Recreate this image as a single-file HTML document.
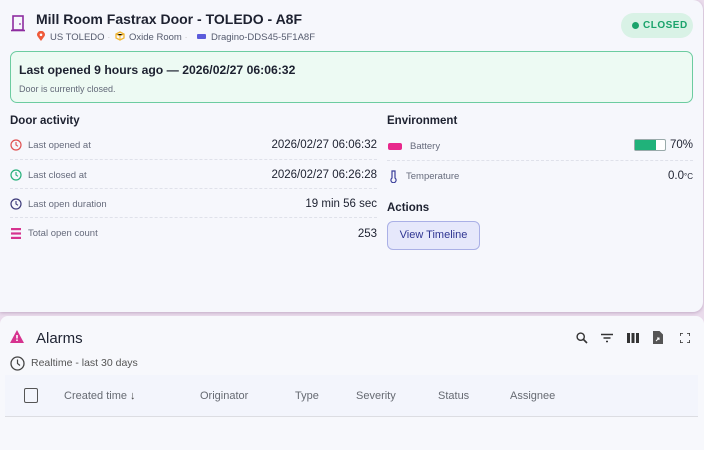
<!DOCTYPE html>
<html><head><meta charset="utf-8"><style>
*{box-sizing:border-box;margin:0;padding:0}
body{width:704px;height:450px;background:#eadcec;font-family:"Liberation Sans",sans-serif;position:relative;overflow:hidden;color:#1f2433}
.card1{position:absolute;left:0;top:0;width:703px;height:312px;background:#f6f7fc;border-radius:0 10px 10px 0;box-shadow:0 1px 3px rgba(120,80,130,.35)}
.card2{position:absolute;left:0;top:316px;width:704px;height:134px;background:#f7f8fc;border-radius:8px 8px 0 0}
.abs{position:absolute;white-space:nowrap}
.t{font-size:14px;font-weight:bold;color:#1d2130}
.sub{font-size:9.5px;color:#555b6e}
.h{font-size:11.5px;font-weight:bold;color:#1d2130}
.lbl{font-size:9.5px;color:#666b7c}
.val{font-size:11.5px;color:#1d2130;text-align:right}
.dash{position:absolute;height:0;border-top:1px dashed #dfe1ea}
.th{font-family:"Liberation Sans Narrow","Liberation Sans",sans-serif;font-size:11px;color:#666a72;position:absolute;top:389px}
</style></head><body>
<div class="card1"></div>
<svg class="abs" style="left:11px;top:15px" width="14" height="17" viewBox="0 0 14 17"><rect x="2" y="1" width="10" height="14" fill="none" stroke="#8e2ca0" stroke-width="1.6"/><line x1="0" y1="15.5" x2="14" y2="15.5" stroke="#8e2ca0" stroke-width="1.6"/><circle cx="9" cy="9" r="0.9" fill="#8e2ca0"/></svg>
<div class="abs t" style="left:36px;top:11px">Mill Room Fastrax Door - TOLEDO - A8F</div>
<svg class="abs" style="left:37px;top:31px" width="8" height="10" viewBox="0 0 8 10"><path d="M4 10C1 6 0 5 0 3.8A4 4 0 0 1 8 3.8C8 5 7 6 4 10Z" fill="#ef5a3a"/><circle cx="4" cy="3.8" r="1.3" fill="#fff"/></svg>
<div class="abs sub" style="left:50px;top:32px">US TOLEDO <span style="color:#ccc">·</span></div>
<svg class="abs" style="left:115px;top:31px" width="10" height="10" viewBox="0 0 10 10"><path d="M5 1 9 3v4L5 9 1 7V3Z" fill="none" stroke="#f2b630" stroke-width="1.3"/><path d="M1 3l4 2 4-2M5 5v4" stroke="#f2b630" stroke-width="1"/></svg>
<div class="abs sub" style="left:129px;top:32px">Oxide Room <span style="color:#ccc">·</span></div>
<div class="abs" style="left:197px;top:34px;width:9px;height:5px;background:#5b5bdb;border-radius:1px"></div>
<div class="abs sub" style="left:211px;top:32px">Dragino-DDS45-5F1A8F</div>
<div class="abs" style="left:621px;top:13px;width:72px;height:25px;background:#d9f2e6;border-radius:13px"></div>
<div class="abs" style="left:632px;top:22px;width:7px;height:7px;background:#1aa36b;border-radius:50%"></div>
<div class="abs" style="left:643px;top:20px;font-size:10px;font-weight:bold;color:#1aa36b;letter-spacing:.5px">CLOSED</div>
<div class="abs" style="left:10px;top:51px;width:683px;height:52px;background:#edfaf3;border:1.5px solid #6ccca0;border-radius:7px"></div>
<div class="abs" style="left:19px;top:63px;font-size:12.2px;font-weight:bold;color:#1d2130">Last opened 9 hours ago — 2026/02/27 06:06:32</div>
<div class="abs" style="left:19px;top:84px;font-size:9px;color:#626878">Door is currently closed.</div>
<div class="abs h" style="left:10px;top:115px">Door activity</div>
<div class="abs h" style="left:387px;top:115px">Environment</div>

<svg class="abs" style="left:10px;top:139px" width="12" height="12" viewBox="0 0 12 12"><circle cx="6" cy="6" r="5" fill="none" stroke="#e05050" stroke-width="1.2"/><path d="M6 3v3l2 1.3" fill="none" stroke="#e05050" stroke-width="1.1"/></svg>
<div class="abs lbl" style="left:28px;top:140px">Last opened at</div>
<div class="abs val" style="right:327px;top:139px">2026/02/27 06:06:32</div>
<div class="dash" style="left:10px;width:367px;top:159px"></div>
<svg class="abs" style="left:10px;top:169px" width="12" height="12" viewBox="0 0 12 12"><circle cx="6" cy="6" r="5" fill="none" stroke="#25b07a" stroke-width="1.2"/><path d="M6 3v3l2 1.3" fill="none" stroke="#25b07a" stroke-width="1.1"/></svg>
<div class="abs lbl" style="left:28px;top:170px">Last closed at</div>
<div class="abs val" style="right:327px;top:169px">2026/02/27 06:26:28</div>
<div class="dash" style="left:10px;width:367px;top:188px"></div>
<svg class="abs" style="left:10px;top:198px" width="12" height="12" viewBox="0 0 12 12"><circle cx="6" cy="6" r="5" fill="none" stroke="#3d3a7a" stroke-width="1.2"/><path d="M6 3v3l2 1.3" fill="none" stroke="#3d3a7a" stroke-width="1.1"/></svg>
<div class="abs lbl" style="left:28px;top:199px">Last open duration</div>
<div class="abs val" style="right:327px;top:198px">19 min 56 sec</div>
<div class="dash" style="left:10px;width:367px;top:217px"></div>
<svg class="abs" style="left:11px;top:228px" width="10" height="11" viewBox="0 0 10 11"><rect y="0" width="10" height="2.2" fill="#d6338f"/><rect y="4.4" width="10" height="2.2" fill="#d6338f"/><rect y="8.8" width="10" height="2.2" fill="#d6338f"/></svg>
<div class="abs lbl" style="left:28px;top:228px">Total open count</div>
<div class="abs val" style="right:327px;top:228px">253</div>

<div class="abs" style="left:388px;top:143px;width:14px;height:7px;background:#e8288c;border-radius:2px"></div>
<div class="abs lbl" style="left:410px;top:141px">Battery</div>
<div class="abs" style="left:634px;top:139px;width:32px;height:12px;border:1px solid #9aa;border-radius:2px;background:#fff"><div style="width:21px;height:10px;background:#20b27a"></div></div>
<div class="abs val" style="right:11px;top:139px">70%</div>
<div class="dash" style="left:387px;width:306px;top:160px"></div>
<svg class="abs" style="left:390px;top:170px" width="7" height="13" viewBox="0 0 7 13"><path d="M2 1h3v7a2.6 2.6 0 1 1-3 0Z" fill="none" stroke="#3b3f9a" stroke-width="1.2"/></svg>
<div class="abs lbl" style="left:406px;top:171px">Temperature</div>
<div class="abs val" style="right:11px;top:170px">0.0<span style="font-size:8px">°C</span></div>
<div class="abs h" style="left:387px;top:202px">Actions</div>
<div class="abs" style="left:387px;top:221px;width:93px;height:29px;background:#e6e8fb;border:1px solid #aab0e6;border-radius:6px;font-size:11px;color:#2f3592;text-align:center;line-height:27px">View Timeline</div>

<div class="card2"></div>
<svg class="abs" style="left:10px;top:330px" width="14" height="13" viewBox="0 0 14 13"><path d="M7 0 14 13H0Z" fill="#d6338f"/><rect x="6.2" y="5" width="1.6" height="3.5" fill="#fff"/><rect x="6.2" y="9.5" width="1.6" height="1.5" fill="#fff"/></svg>
<div class="abs" style="left:36px;top:330px;font-size:15px;color:#1f2433">Alarms</div>
<svg class="abs" style="left:10px;top:356px" width="15" height="15" viewBox="0 0 15 15"><circle cx="7.5" cy="7.5" r="6.5" fill="none" stroke="#444" stroke-width="1.3"/><path d="M7.5 3.5v4l2.5 2" fill="none" stroke="#444" stroke-width="1.2"/></svg>
<div class="abs" style="left:31px;top:357px;font-size:10.5px;color:#555;font-family:'Liberation Sans Narrow','Liberation Sans',sans-serif">Realtime - last 30 days</div>
<svg class="abs" style="left:576px;top:332px" width="12" height="12" viewBox="0 0 12 12"><circle cx="4.7" cy="4.7" r="3.6" fill="none" stroke="#333" stroke-width="1.4"/><path d="M7.5 7.5 11 11" stroke="#333" stroke-width="1.6"/></svg>
<svg class="abs" style="left:601px;top:333px" width="12" height="10" viewBox="0 0 12 10"><path d="M0 1.5h12M2.5 5h7M5 8.5h2" stroke="#333" stroke-width="1.4"/></svg>
<svg class="abs" style="left:627px;top:333px" width="12" height="10" viewBox="0 0 12 10"><rect x="0" width="3" height="10" fill="#333"/><rect x="4.5" width="3" height="10" fill="#333"/><rect x="9" width="3" height="10" fill="#333"/></svg>
<svg class="abs" style="left:653px;top:331px" width="10" height="13" viewBox="0 0 10 13"><path d="M0 0h6.5L10 3.5V13H0Z" fill="#555"/><path d="M3 10l3-3M4 7h2v2" stroke="#fff" stroke-width="1" fill="none"/></svg>
<svg class="abs" style="left:680px;top:333px" width="10" height="10" viewBox="0 0 10 10"><path d="M0 3V0h3M7 0h3v3M10 7v3H7M3 10H0V7" fill="none" stroke="#333" stroke-width="1.6"/></svg>
<div class="abs" style="left:5px;top:375px;width:693px;height:41px;background:#f3f5fc"></div>
<div class="abs" style="left:24px;top:388px;width:14px;height:15px;border:1.5px solid #555;border-radius:2px"></div>
<div class="th" style="left:64px;top:390px">Created time <span style="font-weight:bold;color:#444">↓</span></div>
<div class="th" style="left:200px;top:390px">Originator</div>
<div class="th" style="left:295px;top:390px">Type</div>
<div class="th" style="left:356px;top:390px">Severity</div>
<div class="th" style="left:438px;top:390px">Status</div>
<div class="th" style="left:510px;top:390px">Assignee</div>
<div class="abs" style="left:5px;top:416px;width:693px;height:1px;background:#dcdde2"></div>
</body></html>
